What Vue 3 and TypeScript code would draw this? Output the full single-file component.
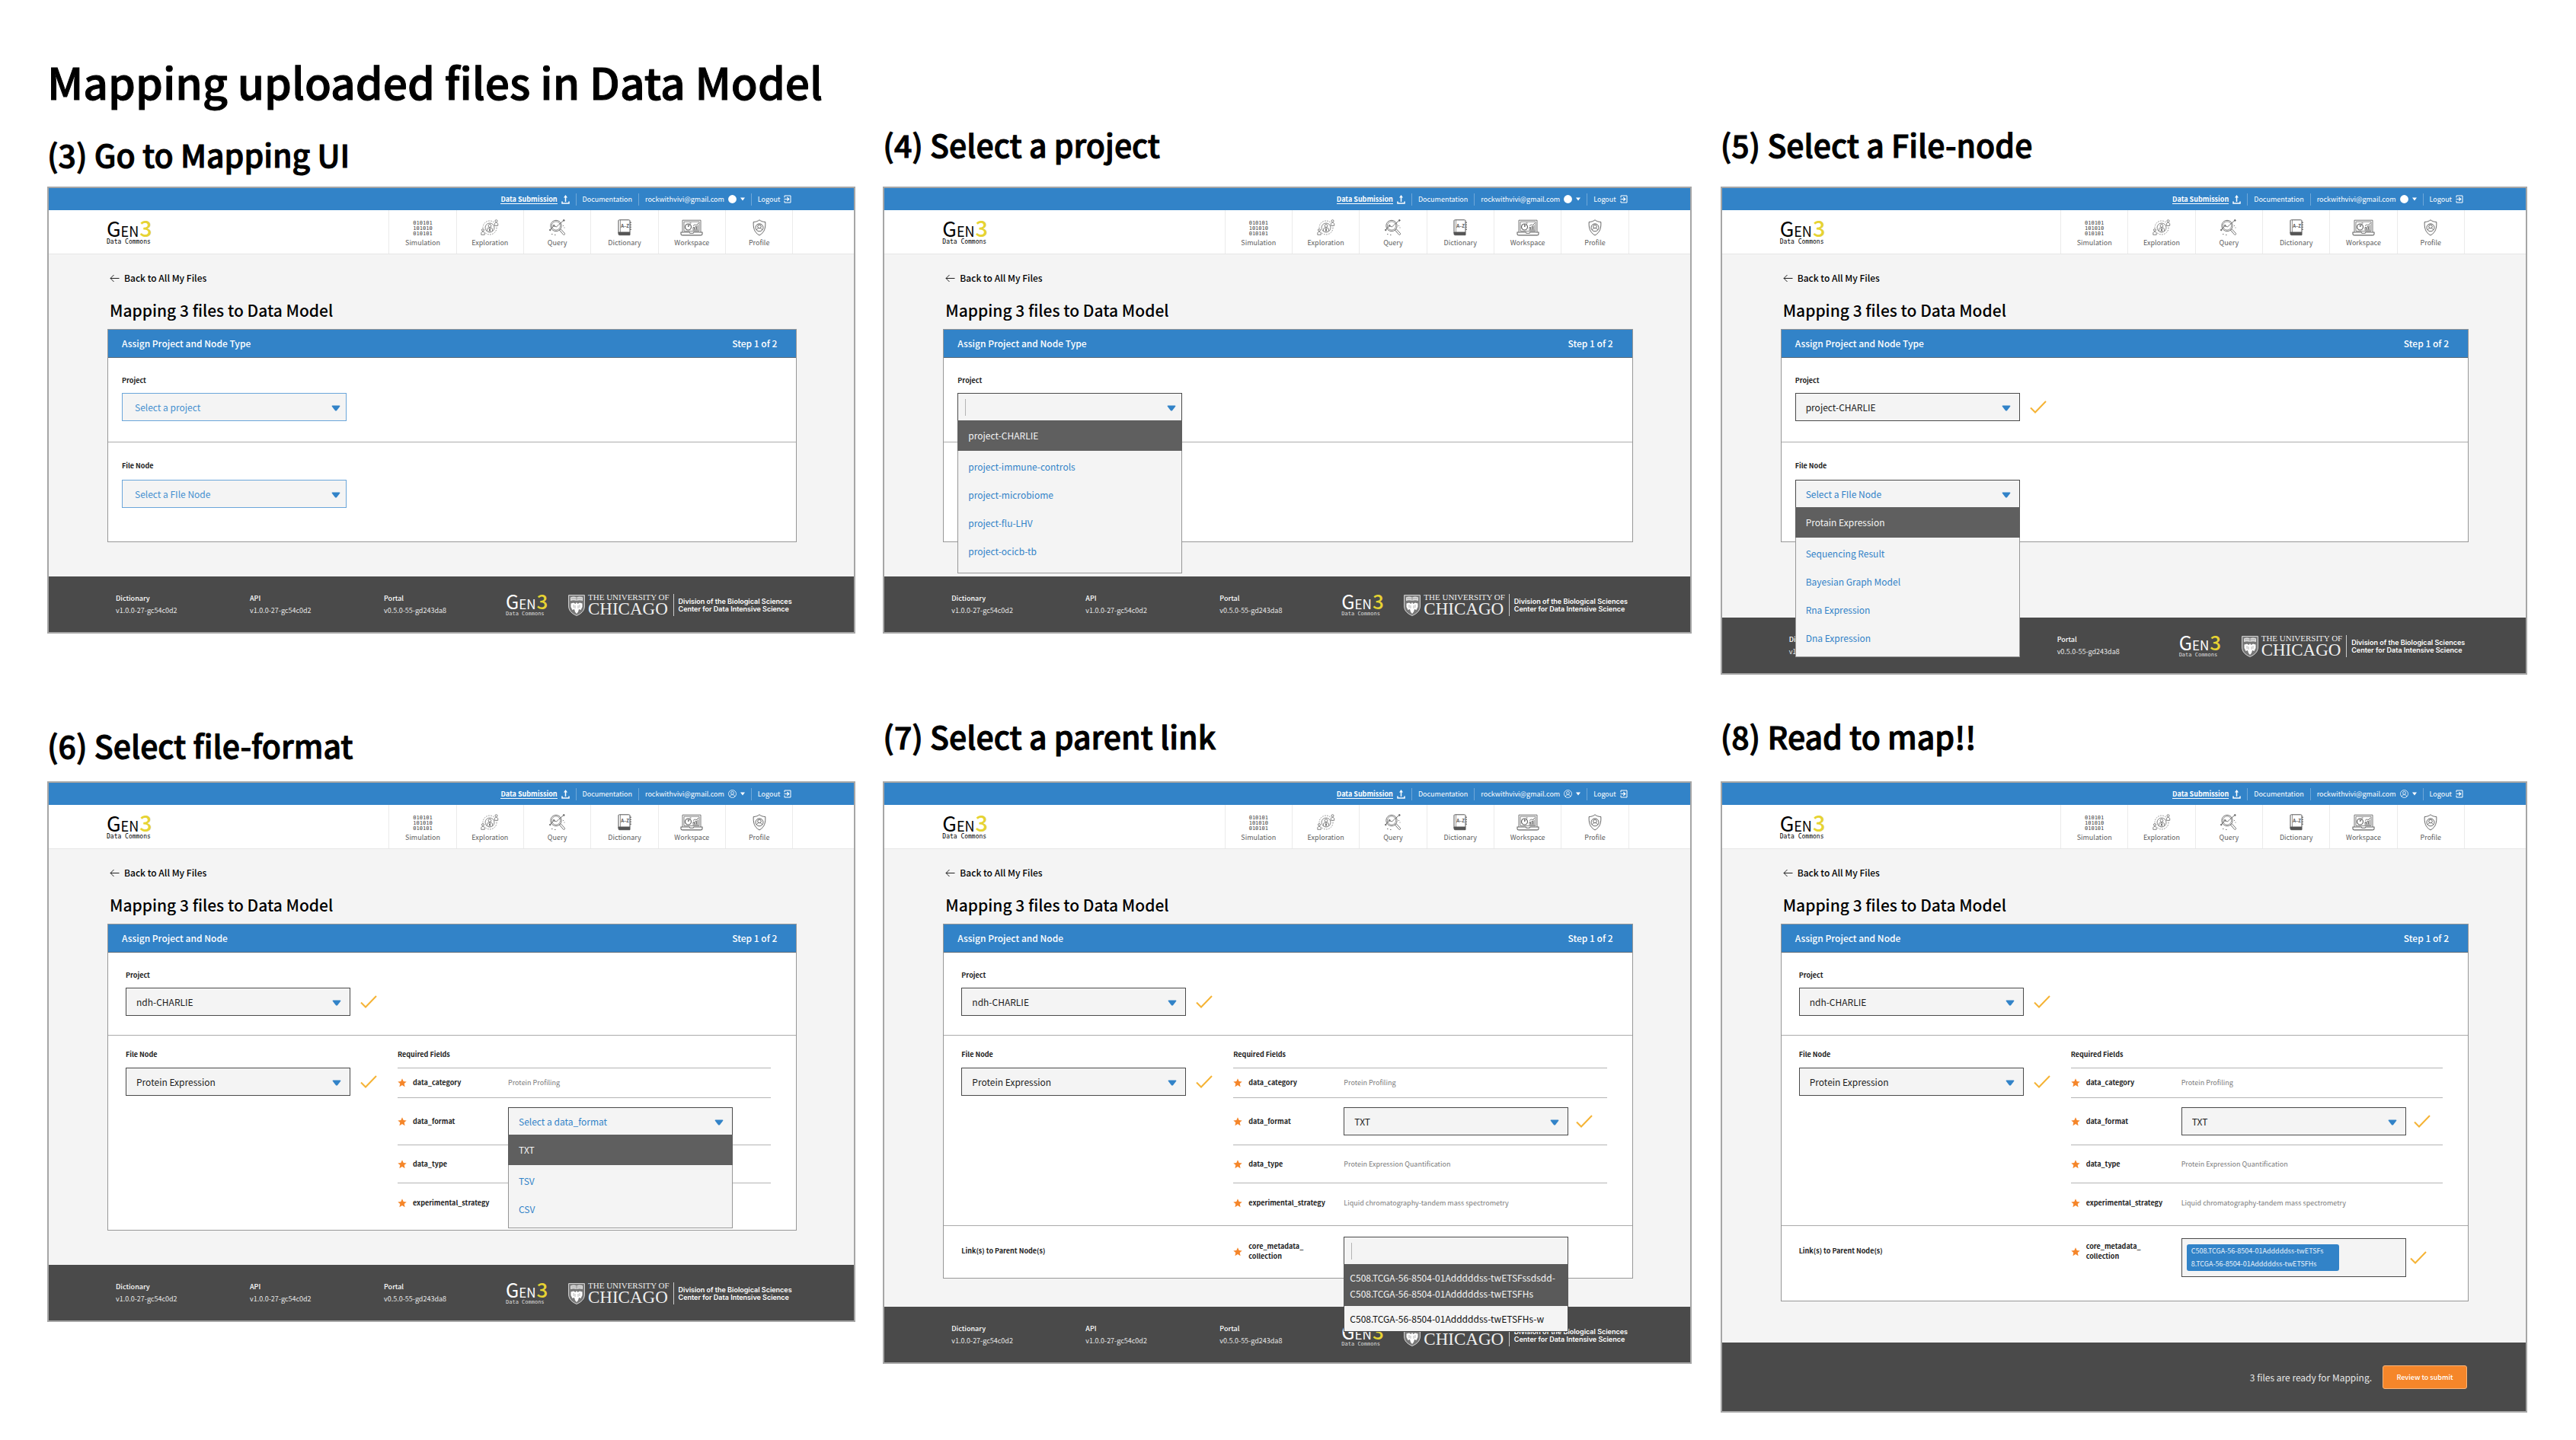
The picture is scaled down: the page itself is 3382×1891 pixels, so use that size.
<script setup lang="ts">
interface Choice {
  value: string
  tone: 'pale' | 'idle' | 'dark'
  options?: string[]
  typing?: boolean
  done?: boolean
}

interface LinkField {
  done: boolean
  options?: string[]
  tag?: string[]
}

interface Step {
  id: number
  heading: string
  lift: 'low' | 'base' | 'mid' | 'high'
  userIcon: 'dot' | 'person'
  panelTitle: string
  project: Choice
  node?: Choice
  format?: Choice
  link?: LinkField
  tail: 'regular' | 'long' | 'short' | 'wide'
  review?: boolean
}

const steps: Step[] = [
  {
    id: 3, heading: '(3) Go to Mapping UI', lift: 'low', userIcon: 'dot',
    panelTitle: 'Assign Project and Node Type',
    project: { value: 'Select a project', tone: 'pale' },
    node: { value: 'Select a FIle Node', tone: 'pale' },
    tail: 'regular',
  },
  {
    id: 4, heading: '(4) Select a project', lift: 'mid', userIcon: 'dot',
    panelTitle: 'Assign Project and Node Type',
    project: {
      value: '', tone: 'dark', typing: true,
      options: ['project-CHARLIE', 'project-immune-controls', 'project-microbiome', 'project-flu-LHV', 'project-ocicb-tb'],
    },
    tail: 'regular',
  },
  {
    id: 5, heading: '(5) Select a File-node', lift: 'mid', userIcon: 'dot',
    panelTitle: 'Assign Project and Node Type',
    project: { value: 'project-CHARLIE', tone: 'dark', done: true },
    node: {
      value: 'Select a FIle Node', tone: 'idle',
      options: ['Protain Expression', 'Sequencing Result', 'Bayesian Graph Model', 'Rna Expression', 'Dna Expression'],
    },
    tail: 'long',
  },
  {
    id: 6, heading: '(6) Select file-format', lift: 'base', userIcon: 'person',
    panelTitle: 'Assign Project and Node',
    project: { value: 'ndh-CHARLIE', tone: 'dark', done: true },
    node: { value: 'Protein Expression', tone: 'dark', done: true },
    format: { value: 'Select a data_format', tone: 'idle', options: ['TXT', 'TSV', 'CSV'] },
    tail: 'regular',
  },
  {
    id: 7, heading: '(7) Select a parent link', lift: 'high', userIcon: 'person',
    panelTitle: 'Assign Project and Node',
    project: { value: 'ndh-CHARLIE', tone: 'dark', done: true },
    node: { value: 'Protein Expression', tone: 'dark', done: true },
    format: { value: 'TXT', tone: 'dark', done: true },
    link: {
      done: false,
      options: ['C508.TCGA-56-8504-01Adddddss-twETSFssdsdd-\nC508.TCGA-56-8504-01Adddddss-twETSFHs', 'C508.TCGA-56-8504-01Adddddss-twETSFHs-w'],
    },
    tail: 'short',
  },
  {
    id: 8, heading: '(8) Read to map!!', lift: 'high', userIcon: 'person',
    panelTitle: 'Assign Project and Node',
    project: { value: 'ndh-CHARLIE', tone: 'dark', done: true },
    node: { value: 'Protein Expression', tone: 'dark', done: true },
    format: { value: 'TXT', tone: 'dark', done: true },
    link: { done: true, tag: ['C508.TCGA-56-8504-01Adddddss-twETSFs', '8.TCGA-56-8504-01Adddddss-twETSFHs'] },
    tail: 'wide', review: true,
  },
]

const navItems = ['Simulation', 'Exploration', 'Query', 'Dictionary', 'Workspace', 'Profile']

const versions = [
  { name: 'Dictionary', value: 'v1.0.0-27-gc54c0d2' },
  { name: 'API', value: 'v1.0.0-27-gc54c0d2' },
  { name: 'Portal', value: 'v0.5.0-55-gd243da8' },
]

const star = 'M6 0.3 L7.7 4 L11.7 4.4 L8.7 7.1 L9.6 11.2 L6 9.1 L2.4 11.2 L3.3 7.1 L0.3 4.4 L4.3 4 Z'
</script>

<template>
  <main class="board">
    <h1>Mapping uploaded files in Data Model</h1>
    <div class="grid">
      <section v-for="s in steps" :key="s.id" class="step">
        <h2 :class="s.lift">{{ s.heading }}</h2>
        <div class="screen">
          <div class="topbar">
            <a href="#" class="current"><span>Data Submission</span>
              <svg width="11" height="12" viewBox="0 0 11 12"><path d="M1 8.5V11h9V8.5M5.5 9V2" fill="none" stroke="#fff" stroke-width="1.5" /><path d="M5.5 0L8 3.500H3Z" fill="#fff" /></svg>
            </a>
            <a href="#">Documentation</a>
            <a href="#" class="user">rockwithvivi@gmail.com
              <svg v-if="s.userIcon === 'dot'" width="11" height="11" viewBox="0 0 11 11"><circle cx="5.500" cy="5.500" r="5.400" fill="#fff" /></svg>
              <svg v-else width="11" height="11" viewBox="0 0 11 11" fill="none" stroke="#fff" stroke-width="0.8"><circle cx="5.500" cy="5.500" r="5" /><circle cx="5.500" cy="4.300" r="1.900" /><path d="M2.200 9C2.800 7 4 6.700 5.500 6.700S8.200 7 8.800 9" /></svg>
              <svg width="6" height="5" viewBox="0 0 6 5"><path d="M0 0.500H6L3 4.500Z" fill="#fff" /></svg>
            </a>
            <a href="#">Logout
              <svg width="10" height="11" viewBox="0 0 10 11" fill="none" stroke="#fff"><path d="M1 3.500V1H9V10H1V7.500" /><path d="M0.500 5.500H6.500M4.300 3.200L6.800 5.500L4.300 7.800" stroke-width="1.200" /></svg>
            </a>
          </div>

          <div class="mainbar">
            <div class="gen3 head">
              <div class="word"><span class="g">G</span><span class="en">EN</span><span class="three">3</span></div>
              <div class="sub">Data Commons</div>
            </div>
            <nav>
              <a v-for="n in navItems" :key="n" href="#">
                <span class="pic">
                  <span v-if="n === 'Simulation'" class="bits">010101<br />101010<br />010101</span>
                  <svg v-else-if="n === 'Exploration'" width="24" height="22" viewBox="0 0 24 22" fill="none" stroke="#666" stroke-width="0.8">
                    <circle cx="12" cy="11" r="9" stroke-dasharray="1.500 1.600" />
                    <circle cx="12" cy="11" r="6" />
                    <circle cx="12" cy="8.500" r="1.900" />
                    <path d="M8.600 15.500V12.800C8.600 11.600 9.500 11 12 11S15.400 11.600 15.400 12.800V15.500M10.500 12.500L13.500 15.500M13.500 12.500L10.500 15.500M12 11V16.500" />
                    <g fill="#fff"><rect x="0" y="11.500" width="5.500" height="9" stroke="none" /><circle cx="3" cy="14" r="1.500" /><path d="M0.800 20.300V18.200C0.800 15.800 5.200 15.800 5.200 18.200V20.300Z" />
                    <circle cx="20.500" cy="2.200" r="1.500" /><path d="M18.300 8.300V6.200C18.300 3.900 22.700 3.900 22.700 6.200V8.300Z" /></g>
                  </svg>
                  <svg v-else-if="n === 'Query'" width="22" height="22" viewBox="0 0 22 22" fill="none" stroke="#666" stroke-width="0.900">
                    <circle cx="9" cy="8.500" r="7.200" /><circle cx="9" cy="8.500" r="5.600" stroke-width="0.700" />
                    <path d="M0.800 14.500L6 8.500L9.500 10L13 6.500L18.500 2" />
                    <circle cx="6.200" cy="8.300" r="1" /><circle cx="1.300" cy="14" r="0.800" fill="#666" /><circle cx="19.300" cy="1.400" r="0.900" fill="#666" />
                    <path d="M13.300 14L15 12.500L20.500 18.500C21 19.500 20 20.800 18.800 20.300Z" />
                    <path d="M3 19.500h2M7 20.500h2M18 8.500h1M19.500 11h1" stroke-dasharray="1 0.500" />
                  </svg>
                  <svg v-else-if="n === 'Dictionary'" width="18" height="22" viewBox="0 0 18 22" fill="none" stroke="#555" stroke-width="1">
                    <path d="M1 18V2C1 1 1.500 0.800 2.500 0.800H14.500C15.500 0.800 16 1.200 16 2V17" />
                    <path d="M1 17H16V20.700H2.500C1.300 20.700 1 20 1 19Z" fill="#555" />
                    <path d="M3.500 1V17" stroke-width="0.600" />
                    <path d="M17 3.500v1.500M17 6.500v1.500M17 9.500v1.500M17 12.500v1.500" stroke-width="1.400" />
                    <text x="9.500" y="10.500" text-anchor="middle" class="az">A–Z</text>
                  </svg>
                  <svg v-else-if="n === 'Workspace'" width="30" height="22" viewBox="0 0 30 22" fill="none" stroke="#666" stroke-width="0.900">
                    <path d="M3 17V1.200H27V17" /><path d="M5 15.500V3.200H25V15.500Z" stroke-width="0.800" />
                    <path d="M1 17H12L13 18.200H17L18 17H29V19.500C29 20.700 28 20.900 27 20.900H3C2 20.900 1 20.700 1 19.500Z" stroke-width="1.100" />
                    <circle cx="10.500" cy="10" r="4" stroke-width="1.200" /><path d="M10.500 10V6M10.500 10L13 6.800M12.500 5L14.500 5" />
                    <path d="M17 13.500V10.500H18.500V13.500M20 13.500V9.500H21.500V13.500M23 13.500V7.500M16.500 14H24M17 8.500L19.500 7L21 8L24 5" />
                  </svg>
                  <svg v-else width="18" height="22" viewBox="0 0 18 22" fill="none" stroke="#555" stroke-width="0.900">
                    <path d="M9 0.800C11 2.500 14 3.500 16.800 3.500C17.200 11 16 17 9 21C2 17 0.800 11 1.200 3.500C4 3.500 7 2.500 9 0.800Z" />
                    <circle cx="9" cy="10.800" r="5" /><circle cx="9" cy="9.500" r="2.300" />
                    <path d="M5.300 13.800C6 12.300 7.500 12.200 7.800 11.500M12.700 13.800C12 12.300 10.500 12.200 10.200 11.500" />
                  </svg>
                </span>
                <span>{{ n }}</span>
              </a>
            </nav>
          </div>

          <div class="body" :class="s.tail">
            <a href="#" class="back">
              <svg width="13" height="11" viewBox="0 0 13 11"><path d="M12.500 5.500H1M5.500 1L1 5.500L5.500 10" fill="none" stroke="#222" /></svg>
              Back to All My Files
            </a>
            <h3>Mapping 3 files to Data Model</h3>

            <form class="panel" :class="{ detailed: s.format }" @submit.prevent>
              <header><span>{{ s.panelTitle }}</span><span>Step 1 of 2</span></header>

              <div class="block first">
                <label class="cap" :for="`project-${s.id}`">Project</label>
                <div class="line">
                  <div class="field">
                    <input v-if="s.project.typing" :id="`project-${s.id}`" type="text" class="ctl dark" />
                    <select v-else :id="`project-${s.id}`" class="ctl" :class="s.project.tone">
                      <option>{{ s.project.value }}</option>
                    </select>
                    <i v-if="s.project.typing" class="bar"></i>
                    <svg class="arrow" :class="{ edge: s.project.tone === 'pale' || s.project.typing }" width="12" height="8" viewBox="0 0 12 8"><path d="M1.500 0.500H10.500Q12 0.500 11 2L7.200 7Q6 8.200 4.800 7L1 2Q0 0.500 1.500 0.500Z" fill="#3283c8" /></svg>
                    <ul v-if="s.project.options" class="menu" role="listbox">
                      <li v-for="o in s.project.options" :key="o" role="option">{{ o }}</li>
                    </ul>
                  </div>
                  <svg v-if="s.project.done" class="check" width="22" height="17" viewBox="0 0 22 17"><path d="M1 9.500L7 15.500L21 1" fill="none" stroke="#f5b335" stroke-width="2" /></svg>
                </div>
              </div>

              <div class="block second">
                <div v-if="s.node" class="nodecol">
                  <label class="cap" :for="`node-${s.id}`">File Node</label>
                  <div class="line">
                    <div class="field">
                      <select :id="`node-${s.id}`" class="ctl" :class="s.node.tone">
                        <option>{{ s.node.value }}</option>
                      </select>
                      <svg class="arrow" :class="{ edge: s.node.tone === 'pale' }" width="12" height="8" viewBox="0 0 12 8"><path d="M1.500 0.500H10.500Q12 0.500 11 2L7.200 7Q6 8.200 4.800 7L1 2Q0 0.500 1.500 0.500Z" fill="#3283c8" /></svg>
                      <ul v-if="s.node.options" class="menu" role="listbox">
                        <li v-for="o in s.node.options" :key="o" role="option">{{ o }}</li>
                      </ul>
                    </div>
                    <svg v-if="s.node.done" class="check" width="22" height="17" viewBox="0 0 22 17"><path d="M1 9.500L7 15.500L21 1" fill="none" stroke="#f5b335" stroke-width="2" /></svg>
                  </div>
                </div>

                <div v-if="s.format" class="required">
                  <div class="cap">Required Fields</div>
                  <table>
                    <tbody>
                      <tr class="r1">
                        <td class="st"><svg width="12" height="12" viewBox="0 0 12 12"><path :d="star" fill="#f5862a" /></svg></td>
                        <th scope="row">data_category</th>
                        <td>Protein Profiling</td>
                      </tr>
                      <tr class="r2">
                        <td class="st"><svg width="12" height="12" viewBox="0 0 12 12"><path :d="star" fill="#f5862a" /></svg></td>
                        <th scope="row"><label :for="`format-${s.id}`">data_format</label></th>
                        <td>
                          <div class="line">
                            <div class="field">
                              <select :id="`format-${s.id}`" class="ctl" :class="s.format.tone">
                                <option>{{ s.format.value }}</option>
                              </select>
                              <svg class="arrow" width="12" height="8" viewBox="0 0 12 8"><path d="M1.500 0.500H10.500Q12 0.500 11 2L7.200 7Q6 8.200 4.800 7L1 2Q0 0.500 1.500 0.500Z" fill="#3283c8" /></svg>
                              <ul v-if="s.format.options" class="menu" role="listbox">
                                <li v-for="o in s.format.options" :key="o" role="option">{{ o }}</li>
                              </ul>
                            </div>
                            <svg v-if="s.format.done" class="check" width="22" height="17" viewBox="0 0 22 17"><path d="M1 9.500L7 15.500L21 1" fill="none" stroke="#f5b335" stroke-width="2" /></svg>
                          </div>
                        </td>
                      </tr>
                      <tr class="r3">
                        <td class="st"><svg width="12" height="12" viewBox="0 0 12 12"><path :d="star" fill="#f5862a" /></svg></td>
                        <th scope="row">data_type</th>
                        <td><template v-if="!s.format.options">Protein Expression Quantification</template></td>
                      </tr>
                      <tr class="r4">
                        <td class="st"><svg width="12" height="12" viewBox="0 0 12 12"><path :d="star" fill="#f5862a" /></svg></td>
                        <th scope="row">experimental_strategy</th>
                        <td><template v-if="!s.format.options">Liquid chromatography-tandem mass spectrometry</template></td>
                      </tr>
                    </tbody>
                  </table>
                </div>
              </div>

              <div v-if="s.link" class="block third">
                <div class="cap parent">Link(s) to Parent Node(s)</div>
                <div class="st"><svg width="12" height="12" viewBox="0 0 12 12"><path :d="star" fill="#f5862a" /></svg></div>
                <label class="cap core" :for="`link-${s.id}`">core_metadata_<br />collection</label>
                <div class="line">
                  <div class="field">
                    <input :id="`link-${s.id}`" type="text" class="ctl dark" :class="{ tall: s.link.tag }" />
                    <i v-if="s.link.options" class="bar"></i>
                    <div v-if="s.link.tag" class="tag"><div v-for="t in s.link.tag" :key="t">{{ t }}</div></div>
                    <ul v-if="s.link.options" class="menu links" role="listbox">
                      <li v-for="o in s.link.options" :key="o" role="option">{{ o }}</li>
                    </ul>
                  </div>
                  <svg v-if="s.link.done" class="check close" width="22" height="17" viewBox="0 0 22 17"><path d="M1 9.500L7 15.500L21 1" fill="none" stroke="#f5b335" stroke-width="2" /></svg>
                </div>
              </div>
            </form>
          </div>

          <footer v-if="s.review" class="review">
            <span>3 files are ready for Mapping.</span>
            <button type="button">Review to submit</button>
          </footer>
          <footer v-else>
            <dl>
              <div v-for="v in versions" :key="v.name"><dt>{{ v.name }}</dt><dd>{{ v.value }}</dd></div>
            </dl>
            <div class="gen3 foot">
              <div class="word"><span class="g">G</span><span class="en">EN</span><span class="three">3</span></div>
              <div class="sub">Data Commons</div>
            </div>
            <svg class="shield" width="22" height="28" viewBox="0 0 22 28">
              <path d="M0.600 0.600H21.400V15C21.400 21 17 25 11 27.400C5 25 0.600 21 0.600 15Z" fill="#777" stroke="#e8e8e8" stroke-width="0.900" />
              <path d="M3 3.500Q7 1.500 11 3.500Q15 1.500 19 3.500V8Q15 6.500 11 8Q7 6.500 3 8Z" fill="#ddd" />
              <path d="M4 5h14M11 3.500V8" stroke="#777" stroke-width="0.600" />
              <path d="M11 10L12.500 12L15 10.500L18.500 11.500V16L16.500 20L14 19L13 22.500L11 25L9 22.500L8 19L5.500 20L3.500 16V11.500L7 10.500L9.500 12Z" fill="#fff" />
              <path d="M7 13V17M9 14V18M13 14V18M15 13V17" stroke="#888" stroke-width="0.600" />
            </svg>
            <div class="uchicago"><div class="uni">THE UNIVERSITY OF</div><div class="chi">CHICAGO</div></div>
            <div class="division">Division of the Biological Sciences<br />Center for Data Intensive Science</div>
          </footer>
        </div>
      </section>
    </div>
  </main>
</template>

<style>
body {
  margin: 0;
  background: #fff;
}
</style>

<style scoped>
* {
  box-sizing: border-box;
}

.board {
  padding: 66px 64px 37px 62px;
  font-family: "Noto Sans CJK SC", "Noto Sans", sans-serif;
  font-size: 9px;
  color: #000;
}

h1,
h2,
h3,
ul,
dl,
dd {
  margin: 0;
  padding: 0;
}

h1,
h2 {
  font-weight: 500;
  -webkit-text-stroke: 1px currentColor;
}

h1 {
  font-size: 57px;
  line-height: 80px;
}

.grid {
  display: grid;
  grid-template-columns: repeat(3, minmax(0, 1fr));
  column-gap: 36px;
  row-gap: 41px;
  align-items: start;
}

.step:nth-child(3n) {
  padding-left: 2px;
}

h2 {
  display: flex;
  align-items: flex-end;
  height: 99px;
  font-size: 41px;
  line-height: 60px;
}

h2.low {
  padding-bottom: 13px;
}

h2.base {
  padding-bottom: 18px;
}

h2.mid {
  padding-bottom: 26px;
}

h2.high {
  padding-bottom: 30px;
}

.screen {
  border: 2px solid #a6a6a6;
  background: #f4f4f4;
}

a {
  color: inherit;
  text-decoration: none;
}

svg {
  display: block;
  flex: none;
}

.topbar {
  display: flex;
  align-items: center;
  justify-content: flex-end;
  height: 29px;
  padding-right: 82px;
  background: #3283c8;
  color: #fff;
  line-height: 14px;
}

.topbar a {
  display: flex;
  align-items: center;
  height: 16px;
  padding: 0 0 0 8px;
  gap: 5px;
}

.topbar a + a {
  margin-left: 8px;
  border-left: 1px solid #6fa7d8;
}

.topbar .current {
  font-weight: 700;
}

.topbar .current span {
  border-bottom: 1px solid #fff;
  line-height: 11px;
}

.mainbar {
  display: flex;
  justify-content: space-between;
  height: 58px;
  padding: 0 80px 0 76px;
  background: #fff;
  border-bottom: 1px solid #e6e6e6;
}

nav {
  display: flex;
  width: 531px;
  border-right: 1px solid #ebebeb;
}

nav a {
  flex: 1;
  display: flex;
  flex-direction: column;
  align-items: center;
  padding-top: 11px;
  border-left: 1px solid #ebebeb;
  color: #606060;
  line-height: 14px;
}

.pic {
  display: flex;
  align-items: center;
  height: 24px;
  margin-bottom: 1px;
}

.bits {
  padding-top: 3px;
  font: 7px/7px "DejaVu Sans Mono", monospace;
  color: #444;
}

.az {
  font: 700 6px "Noto Sans CJK SC", sans-serif;
  fill: #555;
  stroke: none;
}

.gen3 .word {
  display: flex;
  align-items: baseline;
}

.gen3 .three {
  color: #e6d333;
  font-weight: 500;
}

.gen3 .sub {
  font-family: "DejaVu Sans Mono", monospace;
}

.gen3.head {
  padding-top: 6px;
}

.head .word {
  height: 31px;
  line-height: 32px;
}

.head .g {
  font-size: 27px;
}

.head .en {
  font-size: 18px;
}

.head .three {
  margin-left: 1px;
  font-size: 29px;
}

.head .sub {
  font-size: 8px;
  line-height: 9px;
}

.body {
  padding: 19px 75px 45px 77px;
}

.body.long {
  padding-bottom: 99px;
}

.body.short {
  padding-bottom: 37px;
}

.body.wide {
  padding-bottom: 54px;
}

.back {
  display: flex;
  align-items: center;
  gap: 6px;
  padding-left: 3px;
  font-size: 12px;
  line-height: 24px;
  font-weight: 500;
}

h3 {
  margin: 14px 0 9px 3px;
  font-size: 21px;
  line-height: 32px;
  font-weight: 500;
}

.panel {
  border: 1px solid #979797;
  background: #fff;
}

.panel header {
  display: flex;
  justify-content: space-between;
  height: 37px;
  padding: 0 25px 0 18px;
  background: #3283c8;
  border-bottom: 1px solid #5a6a78;
  color: #fff;
  font-size: 12px;
  line-height: 36px;
  font-weight: 500;
}

.block + .block {
  border-top: 1px solid #ababab;
}

.cap {
  display: block;
  line-height: 14px;
  font-weight: 700;
  color: #222;
}

.first {
  padding: 23px 18px 27px;
}

.second {
  display: flex;
  min-height: 131px;
  padding: 24px 33px 44px 18px;
}

.first .cap {
  margin-bottom: 9px;
}

.second .cap {
  margin-bottom: 11px;
}

.detailed .first {
  padding: 23px 23px 25px;
}

.detailed .second {
  padding: 18px 33px 9px 23px;
}

.detailed .second .cap {
  margin-bottom: 10px;
}

.detailed:has(.third) .second {
  padding-bottom: 3px;
}

.line {
  display: flex;
  align-items: center;
}

.field {
  position: relative;
  width: 295px;
}

.ctl {
  display: block;
  width: 100%;
  height: 37px;
  margin: 0;
  padding: 0 13px;
  appearance: none;
  border: 1px solid #4a4a4a;
  border-radius: 0;
  outline: 0;
  background: #f4f4f4;
  color: #1c1c1c;
  font: 12px "Noto Sans CJK SC", "Noto Sans", sans-serif;
}

.ctl.pale {
  padding-left: 16px;
  border-color: #6ba6da;
  color: #4490d0;
}

.ctl.idle {
  color: #3283c8;
}

.ctl.tall {
  height: 51px;
}

.arrow {
  position: absolute;
  top: 16px;
  right: 12px;
}

.arrow.edge {
  right: 8px;
}

.bar {
  position: absolute;
  top: 8px;
  left: 10px;
  width: 1px;
  height: 22px;
  background: #b4b4b4;
}

.check {
  margin-left: 13px;
}

td .check {
  margin-left: 10px;
}

.check.close {
  margin-left: 5px;
}

.menu {
  position: absolute;
  z-index: 2;
  top: calc(100% - 1px);
  left: 0;
  right: 0;
  padding-bottom: 6px;
  list-style: none;
  border: 1px solid #979797;
  border-top: 0;
  background: #f4f4f4;
  color: #3283c8;
  font-size: 12px;
  line-height: 37px;
}

.first .menu {
  padding-bottom: 10px;
}

.menu li {
  padding-left: 13px;
}

.menu li:first-child {
  margin: 0 -1px 2px;
  padding-left: 14px;
  background: #5f5f5f;
  color: #f4f4f4;
  line-height: 40px;
}

.menu.links {
  padding: 0;
  border-color: #4a4a4a;
  color: #111;
}

.menu.links li {
  padding-left: 7px;
  line-height: 33px;
  white-space: pre;
}

.menu.links li:first-child {
  margin-bottom: 0;
  padding: 7px 0 6px 8px;
  background: #5a5a5a;
  line-height: 21px;
}

.nodecol {
  width: 357px;
  flex: none;
}

.required {
  flex: 1;
  min-width: 0;
}

table {
  width: 100%;
  border-collapse: collapse;
  table-layout: fixed;
  line-height: 14px;
}

tr {
  border-top: 1px solid #b4b4b4;
}

td,
th {
  padding: 0;
  text-align: left;
  vertical-align: middle;
}

td {
  color: #7c7c7c;
}

td:nth-child(1) {
  width: 20px;
}

th {
  width: 125px;
  font-weight: 700;
  color: #222;
}

.r1 {
  height: 39px;
}

.r2 {
  height: 62px;
}

.r3 {
  height: 50px;
}

.r4 {
  height: 52px;
}

.third {
  display: flex;
  align-items: flex-start;
  height: 69px;
  padding-left: 23px;
}

.wide .third {
  height: 99px;
}

.third .cap {
  line-height: 66px;
}

.third .parent {
  width: 357px;
}

.third .st {
  width: 20px;
  padding-top: 28px;
}

.third .core {
  width: 125px;
  padding-top: 20px;
  line-height: 13px;
}

.third .line {
  padding-top: 14px;
}

.wide .third .line {
  padding-top: 16px;
}

.tag {
  position: absolute;
  top: 8px;
  left: 7px;
  width: 200px;
  height: 35px;
  padding: 0 6px;
  border-radius: 3px;
  background: #3283c8;
  color: #e8f1fa;
  line-height: 17px;
  white-space: nowrap;
}

footer {
  display: flex;
  height: 73px;
  padding-left: 88px;
  background: #4a4a4a;
  color: #e6e6e6;
}

footer dl {
  display: flex;
  padding-top: 21px;
  width: 512px;
  line-height: 16px;
}

footer dl div {
  width: 176px;
  flex: none;
}

footer dt {
  font-weight: 500;
  color: #fff;
}

.gen3.foot {
  width: 82px;
  padding-top: 19px;
}

.foot .word {
  height: 26px;
  line-height: 26px;
  color: #fff;
}

.foot .g {
  font-size: 25px;
}

.foot .en {
  font-size: 17px;
}

.foot .three {
  margin-left: 1px;
  font-size: 26px;
}

.foot .sub {
  font-size: 7px;
  line-height: 8px;
  color: #ddd;
}

.shield {
  margin-top: 24px;
}

.uchicago {
  margin: 23px 6px 0 4px;
  padding-right: 5px;
  height: 29px;
  border-right: 1px solid #ccc;
  font-family: "Liberation Serif", serif;
  color: #eee;
  white-space: nowrap;
}

.uni {
  font-size: 11px;
  line-height: 9px;
}

.chi {
  font-size: 23px;
  line-height: 21px;
}

.division {
  padding-top: 28px;
  font: 600 9px/10px Inter, sans-serif;
  color: #fff;
  white-space: nowrap;
}

footer.review {
  align-items: center;
  justify-content: flex-end;
  gap: 14px;
  height: 90px;
  padding: 2px 77px 0 0;
  font-size: 12px;
}

button {
  width: 111px;
  height: 31px;
  padding: 0;
  border: 1px solid #f9b57a;
  border-radius: 3px;
  background: #f5862a;
  color: #fff;
  font: 500 9px "Noto Sans CJK SC", "Noto Sans", sans-serif;
}
</style>
